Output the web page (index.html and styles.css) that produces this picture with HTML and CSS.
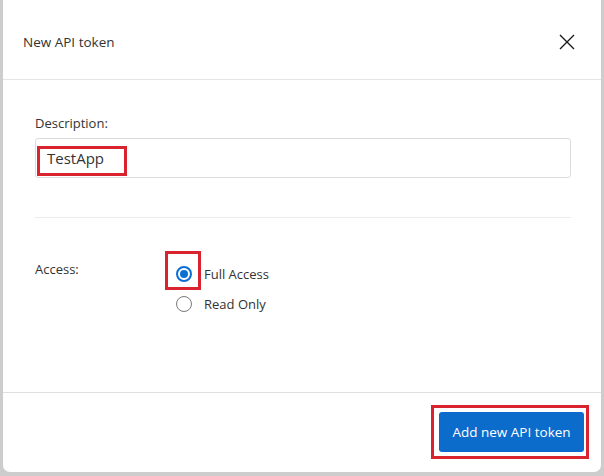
FILE: index.html
```html
<!DOCTYPE html>
<html lang="en">
<head>
<meta charset="utf-8">
<title>New API token</title>
<link rel="stylesheet" href="styles.css">
</head>
<body>
<div class="backdrop">
  <div class="modal">
    <div class="modal-header">
      <h1 class="modal-title">New API token</h1>
      <button class="close" aria-label="Close">
        <svg width="16" height="16" viewBox="0 0 16 16"><path d="M1 1 L15 15 M15 1 L1 15" stroke="#1a1a1a" stroke-width="1.4" fill="none"/></svg>
      </button>
    </div>
    <div class="modal-body">
      <label class="label">Description:</label>
      <div class="input-wrap">
        <div class="input">TestApp</div>
        <span class="mark mark-input"></span>
      </div>
      <hr class="sep">
      <div class="access-row">
        <div class="access-label">Access:</div>
        <div class="options">
          <label class="option">
            <span class="radio checked"><span class="dot"></span></span>
            <span>Full Access</span>
            <span class="mark mark-radio"></span>
          </label>
          <label class="option">
            <span class="radio"></span>
            <span>Read Only</span>
          </label>
        </div>
      </div>
    </div>
    <div class="modal-footer">
      <div class="btn-wrap">
        <button class="btn">Add new API token</button>
        <span class="mark mark-btn"></span>
      </div>
    </div>
  </div>
</div>
</body>
</html>
```
FILE: styles.css
```css
* { box-sizing: border-box; }
html, body { margin: 0; padding: 0; }
body {
  background: #cdcdcd;
  font-family: "Open Sans", "Noto Sans", sans-serif;
  color: #333;
  width: 604px;
  height: 476px;
  overflow: hidden;
}
.backdrop {
  padding: 0 3px 0 3px;
}
.modal {
  background: #fff;
  height: 472px;
  border-radius: 0 0 7px 7px;
  display: flex;
  flex-direction: column;
}
.modal-header {
  height: 80px;
  border-bottom: 1px solid #e5e5e5;
  display: flex;
  align-items: center;
  justify-content: space-between;
  padding: 4px 26px 0 20px;
}
.modal-title {
  margin: 0;
  font-size: 13.5px;
  font-weight: 400;
  color: #333;
}
.close {
  border: 0;
  background: none;
  padding: 0;
  width: 16px;
  height: 16px;
  display: flex;
}
.modal-body {
  flex: 1;
  padding: 33px 30px 0 32px;
}
.label {
  display: block;
  font-size: 13px;
  line-height: 20px;
  margin-bottom: 5px;
}
.input-wrap { position: relative; }
.input {
  height: 40px;
  border: 1px solid #dcdcdc;
  border-radius: 3px;
  padding: 0 0 0 11px;
  font-size: 15px;
  line-height: 38px;
  color: #333;
}
.mark {
  position: absolute;
  border: 3px solid #d9232e;
  pointer-events: none;
}
.mark-input { left: 2px; top: 8px; width: 90px; height: 30px; }
.sep {
  border: 0;
  border-top: 1px solid #ebebeb;
  margin: 39px 0 0 0;
}
.access-row {
  display: flex;
  padding-top: 40px;
}
.access-label {
  width: 141px;
  font-size: 13px;
  line-height: 20px;
  padding-top: 1px;
}
.options { display: flex; flex-direction: column; gap: 10px; margin-top: 6px; }
.option {
  position: relative;
  display: flex;
  align-items: center;
  gap: 12px;
  font-size: 13px;
  line-height: 20px;
  height: 20px;
}
.radio {
  width: 16px;
  height: 16px;
  border-radius: 50%;
  border: 1px solid #7a7a7a;
  display: flex;
  align-items: center;
  justify-content: center;
  background: #fff;
}
.radio.checked { border: 2px solid #0a6fd3; }
.dot { width: 8px; height: 8px; border-radius: 50%; background: #0a6fd3; }
.mark-radio { left: -11px; top: -13px; width: 36px; height: 39px; }
.modal-footer {
  height: 80px;
  border-top: 1px solid #e0e0e0;
  display: flex;
  justify-content: flex-end;
  align-items: flex-start;
  padding: 19px 17px 0 0;
}
.btn-wrap { position: relative; }
.btn {
  background: #0b6ccc;
  color: #fff;
  border: 0;
  border-radius: 3px;
  height: 40px;
  width: 145px;
  font-family: "Open Sans", "Noto Sans", sans-serif;
  font-size: 13.5px;
  padding: 0;
}
.mark-btn { left: -8px; top: -7px; width: 158px; height: 54px; }
```
